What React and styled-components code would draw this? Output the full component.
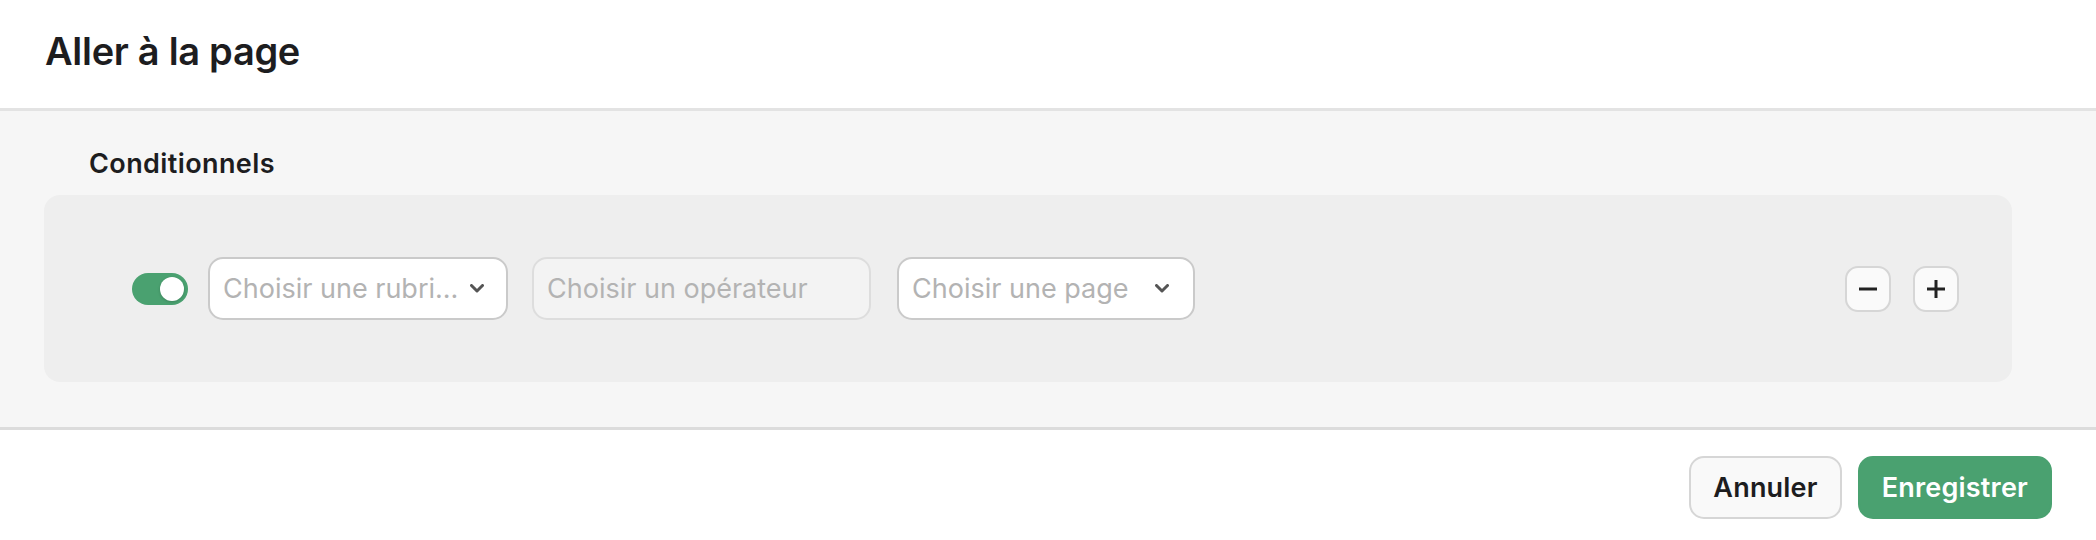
import React from 'react';
import styled, { createGlobalStyle } from 'styled-components';

const GlobalStyle = createGlobalStyle`
  html, body {
    margin: 0;
    padding: 0;
    background: #ffffff;
  }
  * {
    box-sizing: border-box;
  }
`;

const Dialog = styled.div`
  font-family: Inter, 'Noto Sans', sans-serif;
  width: 2096px;
  height: 540px;
  display: flex;
  flex-direction: column;
  background: #ffffff;
  color: #1d1d1f;
`;

const Header = styled.div`
  height: 111px;
  flex-shrink: 0;
  padding: 27px 45px 0;
  border-bottom: 3px solid #e3e3e3;
`;

const Title = styled.h1`
  margin: 0;
  font-size: 38px;
  font-weight: 600;
  letter-spacing: -0.3px;
  line-height: 48px;
`;

const Body = styled.div`
  flex: 1;
  background: #f6f6f6;
  padding: 37px 84px 44px 44px;
  display: flex;
  flex-direction: column;
`;

const SectionLabel = styled.div`
  font-size: 27px;
  font-weight: 600;
  line-height: 32px;
  letter-spacing: 0.4px;
  padding-left: 45px;
  margin-bottom: 15px;
`;

const RulePanel = styled.div`
  background: #eeeeee;
  border-radius: 16px;
  height: 187px;
  padding: 0 53px 0 88px;
  display: flex;
  align-items: center;
`;

const Toggle = styled.div`
  width: 56px;
  height: 32px;
  border-radius: 16px;
  background: ${p => (p.on ? '#4aa170' : '#cfcfcf')};
  display: flex;
  align-items: center;
  justify-content: ${p => (p.on ? 'flex-end' : 'flex-start')};
  padding: 0 4px;
  margin-right: 20px;
  flex-shrink: 0;
`;

const Knob = styled.div`
  width: 24px;
  height: 24px;
  border-radius: 50%;
  background: #ffffff;
  box-shadow: 0 1px 3px rgba(0, 0, 0, 0.18);
`;

const Select = styled.div`
  width: ${p => p.width}px;
  height: 63px;
  flex-shrink: 0;
  margin-right: ${p => p.gap || 0}px;
  border-radius: 15px;
  border: 2px solid ${p => (p.disabled ? '#dddddd' : '#cacaca')};
  background: ${p => (p.disabled ? '#f3f3f3' : '#ffffff')};
  display: flex;
  align-items: center;
  padding: 0 24px 0 13px;
  gap: 12px;

  svg {
    flex-shrink: 0;
  }
`;

const Placeholder = styled.span`
  flex: 1;
  font-size: 27px;
  color: #b3b3b3;
  white-space: nowrap;
`;

const Spacer = styled.div`
  flex: 1;
`;

const IconButton = styled.button`
  width: 46px;
  height: 46px;
  border-radius: 13px;
  border: 2px solid #d6d6d6;
  background: #fafafa;
  padding: 0;
  display: flex;
  align-items: center;
  justify-content: center;
  color: #222222;
  margin-left: ${p => p.offset || 0}px;
`;

const Footer = styled.div`
  height: 113px;
  flex-shrink: 0;
  border-top: 3px solid #dcdcdc;
  padding: 26px 44px 0;
  display: flex;
  justify-content: flex-end;
  align-items: flex-start;
  gap: 16px;
`;

const Button = styled.button`
  font-family: Inter, 'Noto Sans', sans-serif;
  height: 63px;
  padding: 0 22px;
  border-radius: 15px;
  font-size: 27px;
  font-weight: 600;
  letter-spacing: 0.2px;
  border: 2px solid ${p => (p.primary ? '#4aa170' : '#d6d6d6')};
  background: ${p => (p.primary ? '#4aa170' : '#f9f9f9')};
  color: ${p => (p.primary ? '#ffffff' : '#1d1d1f')};
`;

const Chevron = () => (
  <svg width="14" height="9" viewBox="0 0 14 9" fill="none">
    <path d="M1.5 1.5 L7 7 L12.5 1.5" stroke="#555555" strokeWidth="3" strokeLinecap="round" strokeLinejoin="round" />
  </svg>
);

const MinusIcon = () => (
  <svg width="20" height="20" viewBox="0 0 20 20">
    <path d="M1 10 H19" stroke="currentColor" strokeWidth="3" />
  </svg>
);

const PlusIcon = () => (
  <svg width="20" height="20" viewBox="0 0 20 20">
    <path d="M1 10 H19 M10 1 V19" stroke="currentColor" strokeWidth="3" />
  </svg>
);

const App = () => (
  <>
    <GlobalStyle />
    <Dialog>
      <Header>
        <Title>Aller à la page</Title>
      </Header>
      <Body>
        <SectionLabel>Conditionnels</SectionLabel>
        <RulePanel>
          <Toggle on>
            <Knob />
          </Toggle>
          <Select width={300} gap={24}>
            <Placeholder>Choisir une rubri...</Placeholder>
            <Chevron />
          </Select>
          <Select width={339} gap={26} disabled>
            <Placeholder>Choisir un opérateur</Placeholder>
          </Select>
          <Select width={298}>
            <Placeholder>Choisir une page</Placeholder>
            <Chevron />
          </Select>
          <Spacer />
          <IconButton aria-label="Retirer">
            <MinusIcon />
          </IconButton>
          <IconButton aria-label="Ajouter" offset={22}>
            <PlusIcon />
          </IconButton>
        </RulePanel>
      </Body>
      <Footer>
        <Button>Annuler</Button>
        <Button primary>Enregistrer</Button>
      </Footer>
    </Dialog>
  </>
);

export default App;
